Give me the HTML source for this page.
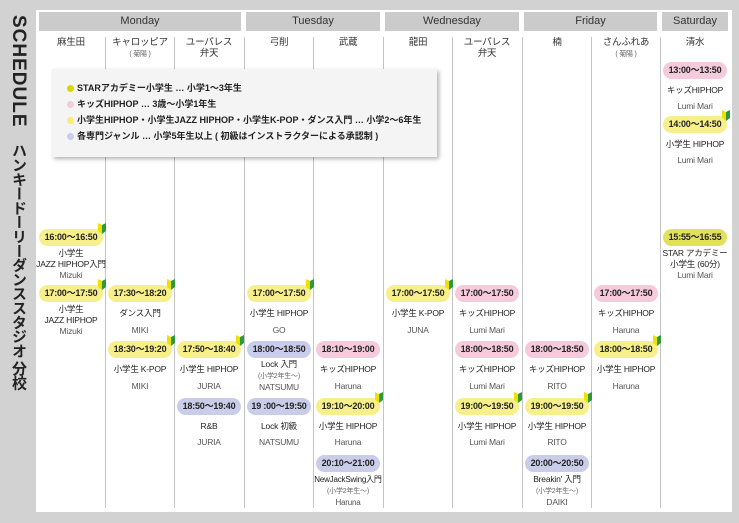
<!DOCTYPE html>
<html><head><meta charset="utf-8">
<style>
*{margin:0;padding:0;box-sizing:border-box}
body{width:739px;height:523px;background:#d2d2d2;position:relative;overflow:hidden;font-family:"Liberation Sans","Noto Sans CJK JP",sans-serif;color:#222}
#panel{position:absolute;left:36px;top:10px;width:696px;height:502px;background:#fff}
.dh{position:absolute;top:12px;height:19px;background:#cbcbcb;font-size:11px;line-height:19px;text-align:center;color:#333}
.vl{position:absolute;top:37px;height:471px;width:1px;background:#c4c4c4}
.t{position:absolute;width:70px;text-align:center;font-size:8.5px;line-height:11px;white-space:nowrap;letter-spacing:-0.2px}
.loc{font-size:9.5px;color:#333;line-height:11px}
.g{color:#555}
.s{font-size:7px;color:#666}
.p{position:absolute;height:17px;width:64px;border-radius:9px;font-size:9px;font-weight:bold;line-height:17px;text-align:center;color:#222;letter-spacing:-0.2px}
.y{background:#f7f08a}.k{background:#f5cadb}.l{background:#c9cdea}.st{background:#e2e25a}
.bm{position:absolute;right:-3px;top:-6px;width:8px;height:11px}
#leg{position:absolute;left:52px;top:69px;width:385px;height:88px;background:#f4f4f4;box-shadow:2px 2px 4px rgba(0,0,0,.3)}
.lr{position:absolute;left:15px;font-size:9px;font-weight:bold;line-height:11px;white-space:nowrap;color:#222}
.dot{display:inline-block;width:7px;height:7px;border-radius:50%;margin-right:3px;vertical-align:-0.5px}
#sch{position:absolute;left:3px;top:15px;width:30px;height:112px;writing-mode:vertical-rl;font-size:19px;font-weight:bold;color:#222;line-height:30px;letter-spacing:1px}
#jp{position:absolute;left:6px;top:143px;width:24px;writing-mode:vertical-rl;font-size:15px;line-height:24px;font-weight:bold;color:#222;letter-spacing:-0.7px}
</style></head><body>
<div id="sch">SCHEDULE</div>
<div id="jp">ハンキードーリーダンススタジオ 分校</div>
<div id="panel"></div>
<div class="dh" style="left:39px;width:202px">Monday</div>
<div class="dh" style="left:246px;width:134px">Tuesday</div>
<div class="dh" style="left:385px;width:134px">Wednesday</div>
<div class="dh" style="left:524px;width:133px">Friday</div>
<div class="dh" style="left:662px;width:66px">Saturday</div>
<div class="vl" style="left:105px"></div><div class="vl" style="left:174px"></div><div class="vl" style="left:244px"></div><div class="vl" style="left:313px"></div><div class="vl" style="left:383px"></div><div class="vl" style="left:452px"></div><div class="vl" style="left:522px"></div><div class="vl" style="left:591px"></div><div class="vl" style="left:660px"></div>

<div class="t loc" style="left:36px;top:37px">麻生田</div>
<div class="t loc" style="left:105px;top:37px">キャロッピア<br><span class="s">( 菊陽 )</span></div>
<div class="t loc" style="left:174px;top:37px">ユーパレス<br>弁天</div>
<div class="t loc" style="left:244px;top:37px">弓削</div>
<div class="t loc" style="left:313px;top:37px">武蔵</div>
<div class="t loc" style="left:383px;top:37px">龍田</div>
<div class="t loc" style="left:452px;top:37px">ユーパレス<br>弁天</div>
<div class="t loc" style="left:522px;top:37px">楠</div>
<div class="t loc" style="left:591px;top:37px">さんふれあ<br><span class="s">( 菊陽 )</span></div>
<div class="t loc" style="left:660px;top:37px">清水</div>

<div id="leg">
<div class="lr" style="top:14px"><span class="dot" style="background:#d8d800"></span>STARアカデミー小学生 … 小学1〜3年生</div>
<div class="lr" style="top:30px"><span class="dot" style="background:#f5cadb"></span>キッズHIPHOP … 3歳〜小学1年生</div>
<div class="lr" style="top:46px"><span class="dot" style="background:#f5ee70"></span>小学生HIPHOP・小学生JAZZ HIPHOP・小学生K-POP・ダンス入門 … 小学2〜6年生</div>
<div class="lr" style="top:62px"><span class="dot" style="background:#c9cdea"></span>各専門ジャンル … 小学5年生以上 ( 初級はインストラクターによる承認制 )</div>
</div>

<svg width="0" height="0" style="position:absolute"><defs><symbol id="b" viewBox="0 0 8 11"><path d="M0 0 L4 2 L4 11 L0 8Z" fill="#f0e000"/><path d="M4 2 L8 0 L8 8 L4 11Z" fill="#2a9a3a"/></symbol></defs></svg>

<div class="p y" style="left:39px;top:229px">16:00〜16:50<svg class="bm"><use href="#b"/></svg></div>
<div class="t" style="left:36px;top:248px">小学生<br>JAZZ HIPHOP入門<br><span class="g">Mizuki</span></div>
<div class="p y" style="left:39px;top:285px">17:00〜17:50<svg class="bm"><use href="#b"/></svg></div>
<div class="t" style="left:36px;top:304px">小学生<br>JAZZ HIPHOP<br><span class="g">Mizuki</span></div>
<div class="p y" style="left:108px;top:285px">17:30〜18:20<svg class="bm"><use href="#b"/></svg></div>
<div class="t" style="left:105px;top:308px">ダンス入門</div><div class="t g" style="left:105px;top:325px">MIKI</div>
<div class="p y" style="left:108px;top:341px">18:30〜19:20<svg class="bm"><use href="#b"/></svg></div>
<div class="t" style="left:105px;top:364px">小学生 K-POP</div><div class="t g" style="left:105px;top:381px">MIKI</div>
<div class="p y" style="left:177px;top:341px">17:50〜18:40<svg class="bm"><use href="#b"/></svg></div>
<div class="t" style="left:174px;top:364px">小学生 HIPHOP</div><div class="t g" style="left:174px;top:381px">JURIA</div>
<div class="p l" style="left:177px;top:398px">18:50〜19:40</div>
<div class="t" style="left:174px;top:421px">R&amp;B</div><div class="t g" style="left:174px;top:437px">JURIA</div>
<div class="p y" style="left:247px;top:285px">17:00〜17:50<svg class="bm"><use href="#b"/></svg></div>
<div class="t" style="left:244px;top:308px">小学生 HIPHOP</div><div class="t g" style="left:244px;top:325px">GO</div>
<div class="p l" style="left:247px;top:341px">18:00〜18:50</div>
<div class="t" style="left:244px;top:359px">Lock 入門<br><span class="s">(小学2年生〜)</span><br><span class="g">NATSUMU</span></div>
<div class="p l" style="left:247px;top:398px">19 :00〜19:50</div>
<div class="t" style="left:244px;top:421px">Lock 初級</div><div class="t g" style="left:244px;top:437px">NATSUMU</div>
<div class="p k" style="left:316px;top:341px">18:10〜19:00</div>
<div class="t" style="left:313px;top:364px">キッズHIPHOP</div><div class="t g" style="left:313px;top:381px">Haruna</div>
<div class="p y" style="left:316px;top:398px">19:10〜20:00<svg class="bm"><use href="#b"/></svg></div>
<div class="t" style="left:313px;top:421px">小学生 HIPHOP</div><div class="t g" style="left:313px;top:437px">Haruna</div>
<div class="p l" style="left:316px;top:455px">20:10〜21:00</div>
<div class="t" style="left:313px;top:474px;font-size:8px">NewJackSwing入門<br><span class="s">(小学2年生〜)</span><br><span class="g">Haruna</span></div>
<div class="p y" style="left:386px;top:285px">17:00〜17:50<svg class="bm"><use href="#b"/></svg></div>
<div class="t" style="left:383px;top:308px">小学生 K-POP</div><div class="t g" style="left:383px;top:325px">JUNA</div>
<div class="p k" style="left:455px;top:285px">17:00〜17:50</div>
<div class="t" style="left:452px;top:308px">キッズHIPHOP</div><div class="t g" style="left:452px;top:325px">Lumi Mari</div>
<div class="p k" style="left:455px;top:341px">18:00〜18:50</div>
<div class="t" style="left:452px;top:364px">キッズHIPHOP</div><div class="t g" style="left:452px;top:381px">Lumi Mari</div>
<div class="p y" style="left:455px;top:398px">19:00〜19:50<svg class="bm"><use href="#b"/></svg></div>
<div class="t" style="left:452px;top:421px">小学生 HIPHOP</div><div class="t g" style="left:452px;top:437px">Lumi Mari</div>
<div class="p k" style="left:525px;top:341px">18:00〜18:50</div>
<div class="t" style="left:522px;top:364px">キッズHIPHOP</div><div class="t g" style="left:522px;top:381px">RITO</div>
<div class="p y" style="left:525px;top:398px">19:00〜19:50<svg class="bm"><use href="#b"/></svg></div>
<div class="t" style="left:522px;top:421px">小学生 HIPHOP</div><div class="t g" style="left:522px;top:437px">RITO</div>
<div class="p l" style="left:525px;top:455px">20:00〜20:50</div>
<div class="t" style="left:522px;top:474px">Breakin' 入門<br><span class="s">(小学2年生〜)</span><br><span class="g">DAIKI</span></div>
<div class="p k" style="left:594px;top:285px">17:00〜17:50</div>
<div class="t" style="left:591px;top:308px">キッズHIPHOP</div><div class="t g" style="left:591px;top:325px">Haruna</div>
<div class="p y" style="left:594px;top:341px">18:00〜18:50<svg class="bm"><use href="#b"/></svg></div>
<div class="t" style="left:591px;top:364px">小学生 HIPHOP</div><div class="t g" style="left:591px;top:381px">Haruna</div>
<div class="p k" style="left:663px;top:62px">13:00〜13:50</div>
<div class="t" style="left:660px;top:85px">キッズHIPHOP</div><div class="t g" style="left:660px;top:101px">Lumi Mari</div>
<div class="p y" style="left:663px;top:116px">14:00〜14:50<svg class="bm"><use href="#b"/></svg></div>
<div class="t" style="left:660px;top:139px">小学生 HIPHOP</div><div class="t g" style="left:660px;top:155px">Lumi Mari</div>
<div class="p st" style="left:663px;top:229px">15:55〜16:55</div>
<div class="t" style="left:660px;top:248px">STAR アカデミー<br>小学生 (60分)<br><span class="g">Lumi Mari</span></div>
</body></html>
